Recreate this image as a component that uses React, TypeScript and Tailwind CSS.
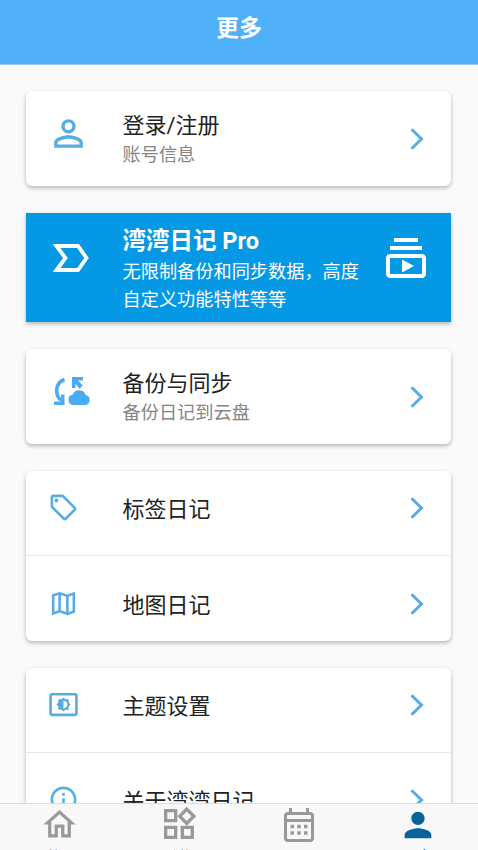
import React from "react";
import type { IconType } from "react-icons";
import {
  MdInfoOutline,
  MdOutlineHome,
  MdOutlineLocalOffer,
  MdOutlineMap,
  MdOutlineSettingsBrightness,
  MdOutlineSubscriptions,
  MdOutlineWidgets,
  MdPerson,
  MdPersonOutline,
} from "react-icons/md";

const Chevron = () => (
  <svg viewBox="0 0 14 22" className="w-[14px] h-[22px] shrink-0" fill="none">
    <path d="M1.5 1.2 11.5 11 1.5 20.8" stroke="#55ade3" strokeWidth="3" />
  </svg>
);

const LabelIcon = () => (
  <svg viewBox="0 0 36 28" className="w-9 h-7" fill="none">
    <path d="M3.500 2H25l8.500 12L25 26H3.500l9-12z" stroke="#fff" strokeWidth="3.800" />
  </svg>
);

const SyncCloudIcon = () => (
  <svg viewBox="0 0 36 29" className="w-9 h-[29px]" fill="#4aabf5">
    <path d="M10.500 2.500C1 6 .5 17.500 7 23.500" fill="none" stroke="#4aabf5" strokeWidth="3.600" />
    <path d="M10.500 17.500V28H0v-3.600h7V17.500z" />
    <path d="M18 0h11v3.500h-4.800l4.800 5.200c-1.500.7-2.400 1.700-3 3.300-1-.8-2.800-3-4.500-5.500V11H18z" />
    <path d="M19.700 28h11a5 5 0 0 0 .9-9.900 6.800 6.800 0 0 0-12.800-.6A5.300 5.300 0 0 0 19.700 28z" />
  </svg>
);

const CalendarIcon = () => (
  <svg
    viewBox="0 0 30 34"
    className="w-[30px] h-[34px] mt-1 mb-1 shrink-0"
    fill="none"
    stroke="#999"
    strokeWidth="3"
  >
    <rect x="1.500" y="5.500" width="27" height="27" rx="2.500" />
    <path d="M1.500 12.500h27M6.500 0v6M23.500 0v6" />
    <path
      d="M6.500 18.500H10M13.200 18.500h3.500M20 18.500h3.500M6.500 25H10M13.200 25h3.500M20 25h3.500"
      strokeWidth="3.500"
    />
  </svg>
);

const Card = ({ children }: { children: React.ReactNode }) => (
  <div className="bg-white rounded-md shadow-[0_2px_4px_rgba(0,0,0,0.28)]">{children}</div>
);

const AccountRow = ({
  icon,
  title,
  subtitle,
}: {
  icon: React.ReactNode;
  title: string;
  subtitle: string;
}) => (
  <div className="h-[95px] pl-[26px] pr-[27px] flex items-center">
    <div className="w-[70.500px] pb-[11px]">{icon}</div>
    <div className="flex-1">
      <div className="text-[22px] leading-[31px] text-[#222]">{title}</div>
      <div className="text-[18.200px] leading-[27px] text-[#858585]">{subtitle}</div>
    </div>
    <Chevron />
  </div>
);

const MenuRow = ({ icon: Icon, title }: { icon: IconType; title: string }) => (
  <div className="h-[74px] pl-[22px] pr-[27px] flex items-center">
    <div className="w-[74.500px] pb-[1px]">
      <Icon className="w-[31px] h-[31px] text-[#55ade3]" />
    </div>
    <div className="flex-1 text-[22px] leading-[32px] pt-1 text-[#222]">{title}</div>
    <Chevron />
  </div>
);

const App = () => {
  return (
    <div className="w-full h-[850px] overflow-hidden flex flex-col bg-[#fafafa] font-['Roboto','Noto_Sans_CJK_SC',sans-serif]">
      {/* Header */}
      <header className="h-[65px] shrink-0 bg-[#50aff9] border-b border-[#9fc9ec] pb-[5px] flex items-center justify-center">
        <h1 className="text-[23px] font-bold text-white">更多</h1>
      </header>

      {/* Scrolling list */}
      <main className="flex-1 min-h-0 overflow-hidden pl-[26px] pr-[27px] pt-[26px] flex flex-col gap-[27px] *:shrink-0">
        <Card>
          <AccountRow
            icon={<MdPersonOutline className="w-[43px] h-[43px] -ml-[5px] text-[#55ade3]" />}
            title="登录/注册"
            subtitle="账号信息"
          />
        </Card>

        {/* Pro banner */}
        <div className="h-[109px] bg-[#0599e5] text-white pl-[26px] flex shadow-[0_2px_4px_rgba(0,0,0,0.28)]">
          <div className="w-[70.500px] pt-[31px] pl-[1px]">
            <LabelIcon />
          </div>
          <div className="w-[259px] pt-[11px]">
            <div className="text-[23.500px] leading-[34px] font-bold">湾湾日记 Pro</div>
            <p className="text-[18.200px] leading-[28px] whitespace-nowrap">
              无限制备份和同步数据，高度
              <br />
              自定义功能特性等等
            </p>
          </div>
          <MdOutlineSubscriptions className="w-12 h-12 mt-[21px] shrink-0" />
        </div>

        <Card>
          <AccountRow
            icon={
              <div className="pl-[2px]">
                <SyncCloudIcon />
              </div>
            }
            title="备份与同步"
            subtitle="备份日记到云盘"
          />
        </Card>

        <Card>
          <MenuRow icon={MdOutlineLocalOffer} title="标签日记" />
          <div className="h-[11px] border-b border-[#e8e8e8]" />
          <div className="pt-[11px]">
            <MenuRow icon={MdOutlineMap} title="地图日记" />
          </div>
        </Card>

        <Card>
          <MenuRow icon={MdOutlineSettingsBrightness} title="主题设置" />
          <div className="h-[11px] border-b border-[#e8e8e8]" />
          <div className="pt-[10px]">
            <MenuRow icon={MdInfoOutline} title="关于湾湾日记" />
          </div>
        </Card>
      </main>

      {/* Bottom tabs */}
      <nav className="h-[47px] shrink-0 overflow-hidden bg-[#f8f8f8] border-t border-[#dcdcdc] grid grid-cols-4 text-[13px] text-[#999]">
        <div className="flex flex-col items-center">
          <MdOutlineHome className="w-[39px] h-[39px] mt-[1px] mb-[2px] shrink-0" />
          <span>首页</span>
        </div>
        <div className="flex flex-col items-center">
          <MdOutlineWidgets className="w-10 h-10 mb-[2px] shrink-0" />
          <span>功能</span>
        </div>
        <div className="flex flex-col items-center">
          <CalendarIcon />
          <span>日历</span>
        </div>
        <div className="flex flex-col items-center text-[#07639a]">
          <MdPerson className="w-10 h-10 mt-[1px] mb-[1px] shrink-0" />
          <span>更多</span>
        </div>
      </nav>
    </div>
  );
};

export default App;
